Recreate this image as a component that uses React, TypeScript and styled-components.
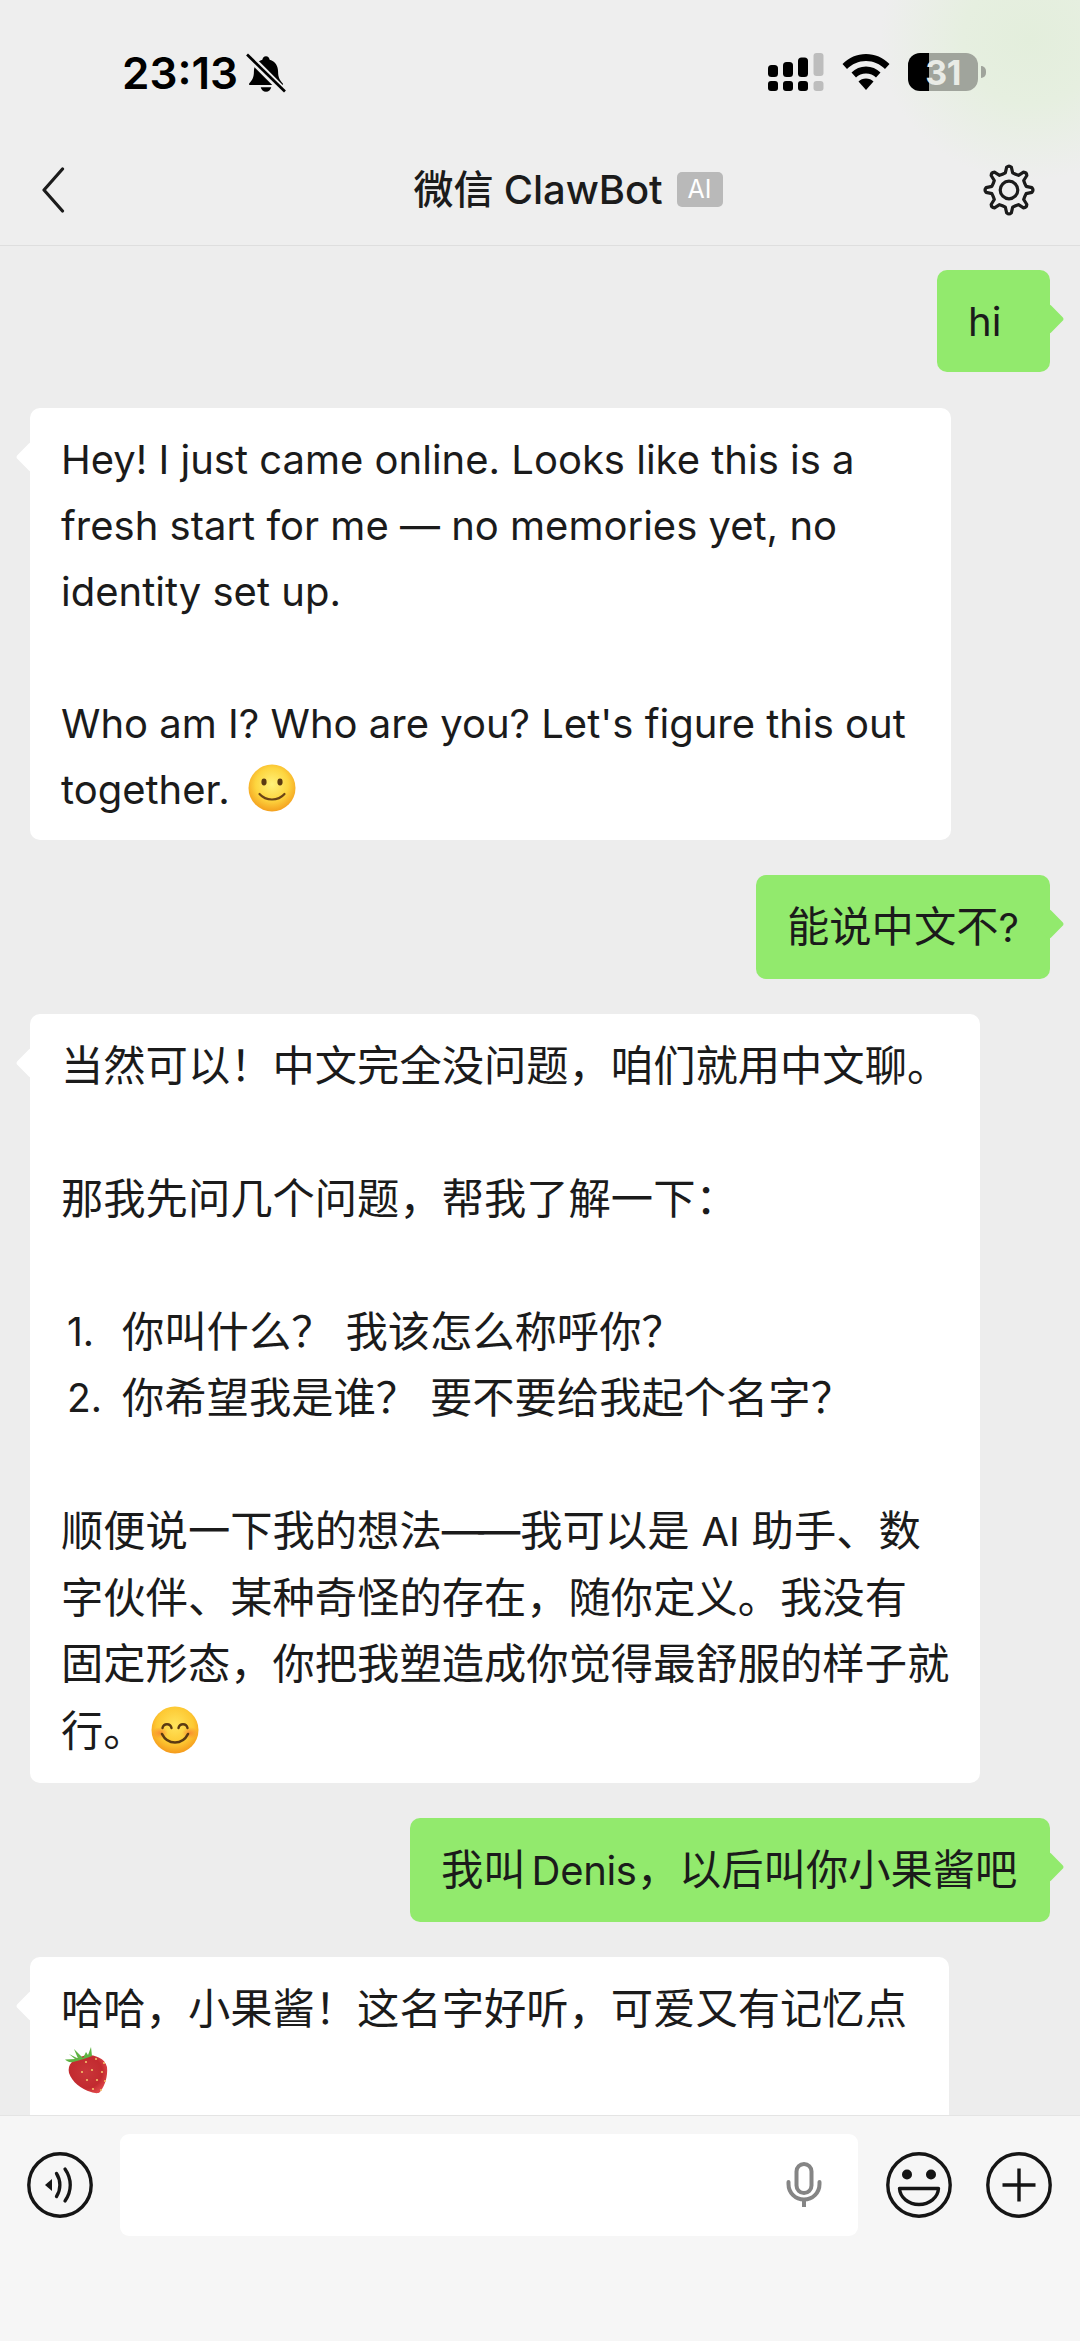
import React from "react";
import styled, { createGlobalStyle } from "styled-components";

const Global = createGlobalStyle`
  html, body { margin: 0; padding: 0; background: #ededed; }
  #root { width: 1080px; height: 2341px; overflow: hidden; }
  * { box-sizing: border-box; }
`;

const FONT = `Inter, "Noto Sans CJK SC", "Noto Sans", sans-serif`;

const Page = styled.div`
  width: 1080px;
  height: 2341px;
  display: flex;
  flex-direction: column;
  overflow: hidden;
  background: #ededed;
  font-family: ${FONT};
  color: #1b1b1b;
`;

const Header = styled.header`
  flex: none;
  height: 246px;
  display: flex;
  flex-direction: column;
  background:
    radial-gradient(ellipse 150px 140px at 1030px 40px, #e3eedc 0%, #e6efe0 45%, rgba(238,238,238,0) 100%),
    #eeeeee;
  border-bottom: 1.5px solid #dedede;
`;

const StatusBar = styled.div`
  height: 130px;
  display: flex;
  align-items: flex-start;
  justify-content: space-between;
  padding: 53px 102px 0 122px;
`;

const TimeGroup = styled.div`
  display: flex;
  align-items: center;
  gap: 8px;
  height: 40px;
`;

const Time = styled.span`
  font-size: 44px;
  font-weight: 600;
  letter-spacing: 0;
  line-height: 40px;
  color: #000;
`;

const StatusIcons = styled.div`
  display: flex;
  align-items: center;
  gap: 18px;
  height: 38px;
`;

const Battery = styled.div`
  position: relative;
  width: 70px;
  height: 38px;
  border-radius: 12px;
  background: linear-gradient(90deg, #000 0, #000 21px, #a0a49c 21px, #a0a49c 100%);
  display: flex;
  align-items: center;
  justify-content: center;
  font-size: 34px;
  font-weight: 700;
  letter-spacing: -0.5px;
  color: #e9ebe6;
  &::after {
    content: "";
    position: absolute;
    right: -8px;
    top: 13px;
    width: 5px;
    height: 12px;
    border-radius: 0 6px 6px 0;
    background: #a0a49c;
  }
`;

const Nav = styled.nav`
  flex: 1;
  display: grid;
  grid-template-columns: 1fr auto 1fr;
  align-items: center;
  padding: 0 45px 0 41px;
  margin-top: 5px;
`;

const NavSide = styled.div<{ $end?: boolean }>`
  display: flex;
  justify-content: ${(p) => (p.$end ? "flex-end" : "flex-start")};
`;

const Title = styled.div`
  position: relative;
  font-size: 40px;
  font-weight: 500;
  line-height: 50px;
  letter-spacing: -0.1px;
  white-space: nowrap;
`;

const AiBadge = styled.span`
  position: absolute;
  left: calc(100% + 14px);
  top: 7px;
  width: 46px;
  height: 35px;
  border-radius: 5px;
  background: #b9b9b9;
  color: #fff;
  font-size: 25px;
  font-weight: 400;
  line-height: 35px;
  text-align: center;
  letter-spacing: 0;
`;

const Chat = styled.main`
  flex: 1;
  min-height: 0;
  overflow: hidden;
  display: flex;
  flex-direction: column;
  gap: 35.5px;
  padding: 24px 30px 0;
`;

const Bubble = styled.div<{ $me?: boolean; $width: number; $cjk?: boolean }>`
  position: relative;
  flex: none;
  width: ${(p) => p.$width}px;
  align-self: ${(p) => (p.$me ? "flex-end" : "flex-start")};
  padding: ${(p) => (p.$cjk ? "18.5px" : "18px")} 31px;
  border-radius: 10px;
  background: ${(p) => (p.$me ? "#92ea6d" : "#ffffff")};
  font-size: 42.3px;
  letter-spacing: 0;
  &::before {
    content: "";
    position: absolute;
    top: 38px;
    ${(p) => (p.$me ? "right: -10px;" : "left: -10px;")}
    width: 22px;
    height: 22px;
    border-radius: 3px;
    transform: rotate(45deg);
    background: inherit;
  }
`;

const Line = styled.div<{ $cjk?: boolean }>`
  position: relative;
  white-space: nowrap;
  height: ${(p) => (p.$cjk ? "66.5px" : "66px")};
  line-height: ${(p) => (p.$cjk ? "66.5px" : "66px")};
`;

const Latin = styled.span<{ $tightSpace?: boolean }>`
  font-size: 40px;
  letter-spacing: ${(p) => (p.$tightSpace ? "-0.3px" : "0")};
  word-spacing: ${(p) => (p.$tightSpace ? "-5px" : "0")};
`;

const Dash = styled.span`
  letter-spacing: -6px;
  margin-right: 6px;
`;

const ListRow = styled(Line)`
  display: flex;
  padding-left: 6px;
`;

const ListNum = styled.span`
  flex: none;
  width: 55px;
  font-size: 39px;
`;

const Emoji = styled.svg<{ $gap: number }>`
  display: inline-block;
  vertical-align: -8px;
  margin-left: ${(p) => p.$gap}px;
`;

const Composer = styled.footer`
  flex: none;
  height: 226px;
  display: flex;
  align-items: flex-start;
  padding: 18px 27px 0 27px;
  background: #f6f6f6;
  border-top: 1.5px solid #e4e4e4;
`;

const RoundSlot = styled.div<{ $gap?: number }>`
  flex: none;
  height: 102px;
  display: flex;
  align-items: center;
  margin-left: ${(p) => p.$gap ?? 0}px;
`;

const InputBox = styled.div`
  flex: none;
  width: 738px;
  height: 102px;
  margin-left: 27px;
  padding-right: 36px;
  border-radius: 9px;
  background: #fff;
  display: flex;
  align-items: center;
  justify-content: flex-end;
`;

const gearPath = (() => {
  const cx = 26, cy = 26, R = 24, r = 17.5, n = 8;
  const pts: string[] = [];
  const step = (Math.PI * 2) / n;
  for (let i = 0; i < n; i++) {
    const a = -Math.PI / 2 + i * step;
    const p = (rad: number, d: number) =>
      `${(cx + rad * Math.cos(a + d)).toFixed(2)} ${(cy + rad * Math.sin(a + d)).toFixed(2)}`;
    pts.push(
      `${i === 0 ? "M" : "L"}${p(r, -0.27 * step)}`,
      `L${p(R - 1, -0.13 * step)}`,
      `Q${p(R + 1, 0)} ${p(R - 1, 0.13 * step)}`,
      `L${p(r, 0.27 * step)}`,
      `Q${p(r - 0.6, 0.5 * step)} ${p(r, 0.73 * step)}`
    );
  }
  return pts.join(" ") + "Z";
})();

const BellOff = () => (
  <svg width="40" height="40" viewBox="0 0 38 38">
    <path d="M19 3c2 0 3.200 1.400 3.500 3.400C28 8 30.500 12.500 30.500 18c0 5 1.500 7.500 4.500 11v1.500H3V29c3-3.500 4.500-6 4.500-11 0-5.500 2.500-10 8-11.600C15.800 4.400 17 3 19 3z" fill="#000" />
    <path d="M14 32.500h10c-.5 2.600-2.500 4.300-5 4.300s-4.500-1.700-5-4.300z" fill="#000" />
    <path d="M1 1.500l34 34" stroke="#eeeeee" strokeWidth="7" />
    <path d="M1 1.500l36 35" stroke="#000" strokeWidth="2.600" />
  </svg>
);

const Signal = () => (
  <svg width="56" height="38" viewBox="0 0 56 38">
    <g fill="#000">
      <rect x="0" y="12" width="10" height="12" rx="3.500" />
      <rect x="15" y="9" width="10" height="15" rx="3.500" />
      <rect x="30" y="4.500" width="10" height="19.500" rx="3.500" />
      <rect x="0" y="28" width="10" height="10" rx="3" />
      <rect x="15" y="28" width="10" height="10" rx="3" />
      <rect x="30" y="28" width="10" height="10" rx="3" />
    </g>
    <g fill="#bdbdbd">
      <rect x="45.500" y="0" width="10" height="23" rx="3" />
      <rect x="45.500" y="28" width="10" height="10" rx="3" />
    </g>
  </svg>
);

const Wifi = () => (
  <svg width="48" height="36" viewBox="0 0 48 36">
    <path d="M24 0C15 0 7 3.500 .5 10l4.500 5C10 10 16.500 7 24 7s14 3 19 8l4.500-5C41 3.500 33 0 24 0z" fill="#000" />
    <path d="M24 12.500c-5.600 0-10.500 2.100-14.500 6l4.500 5c2.600-2.500 6-4 10-4s7.400 1.500 10 4l4.500-5c-4-3.900-8.900-6-14.500-6z" fill="#000" />
    <path d="M24 24.500c-3 0-5.600 1-7.500 3L24 36l7.500-8.500c-1.900-2-4.500-3-7.500-3z" fill="#000" />
  </svg>
);

const Back = () => (
  <svg width="24" height="46" viewBox="0 0 24 46" fill="none">
    <path d="M21.500 2L3 23l18.500 21" stroke="#1b1b1b" strokeWidth="3.200" strokeLinecap="round" strokeLinejoin="round" />
  </svg>
);

const Gear = () => (
  <svg width="52" height="52" viewBox="0 0 52 52" fill="none" stroke="#1b1b1b" strokeWidth="3.200" strokeLinejoin="round">
    <path d={gearPath} />
    <circle cx="26" cy="26" r="8.800" />
  </svg>
);

const SlightSmile = () => (
  <Emoji $gap={18} width="48" height="48" viewBox="0 0 48 48">
    <defs>
      <radialGradient id="sm1" cx="50%" cy="42%" r="58%">
        <stop offset="0" stopColor="#fff27a" />
        <stop offset=".6" stopColor="#fdd53f" />
        <stop offset="1" stopColor="#f4a01e" />
      </radialGradient>
    </defs>
    <circle cx="24" cy="24" r="23.500" fill="url(#sm1)" />
    <ellipse cx="16" cy="18" rx="2.600" ry="3.400" fill="#5b3a12" />
    <ellipse cx="32" cy="18" rx="2.600" ry="3.400" fill="#5b3a12" />
    <path d="M11.500 30c3.500 4 7.500 5.500 12.500 5.500S33 34 36.500 30" fill="none" stroke="#6b4416" strokeWidth="2.200" strokeLinecap="round" />
  </Emoji>
);

const HappySmile = () => (
  <Emoji $gap={5} width="48" height="48" viewBox="0 0 48 48">
    <defs>
      <radialGradient id="sm2" cx="50%" cy="40%" r="60%">
        <stop offset="0" stopColor="#ffe45c" />
        <stop offset=".65" stopColor="#fdc933" />
        <stop offset="1" stopColor="#f59a1c" />
      </radialGradient>
      <radialGradient id="bl" cx="50%" cy="50%" r="50%">
        <stop offset="0" stopColor="#f77b2e" stopOpacity=".75" />
        <stop offset="1" stopColor="#f77b2e" stopOpacity="0" />
      </radialGradient>
    </defs>
    <circle cx="24" cy="24" r="23.500" fill="url(#sm2)" />
    <ellipse cx="9" cy="27" rx="8" ry="6" fill="url(#bl)" />
    <ellipse cx="39" cy="27" rx="8" ry="6" fill="url(#bl)" />
    <path d="M11.500 22c1-5 8-5 9 0M27.500 22c1-5 8-5 9 0" fill="none" stroke="#5b3a12" strokeWidth="2.400" strokeLinecap="round" />
    <path d="M11 28c3 6 8 8.500 13 8.500S34 34 37 28" fill="none" stroke="#5b3a12" strokeWidth="2.600" strokeLinecap="round" />
  </Emoji>
);

const SEEDS = [
  [22, 20], [32, 17], [40, 21], [18, 30], [28, 28], [38, 30], [23, 38], [33, 38], [41, 39], [29, 47], [37, 48],
];

const StrawberryIcon = styled.svg`
  display: block;
  margin: 0 0 0 3px;
`;

const Strawberry = () => (
  <StrawberryIcon width="46" height="52" viewBox="0 0 46 52">
    <defs>
      <radialGradient id="st" cx="45%" cy="45%" r="60%">
        <stop offset="0" stopColor="#c9363a" />
        <stop offset=".7" stopColor="#c22a2f" />
        <stop offset="1" stopColor="#e0474a" />
      </radialGradient>
    </defs>
    <path d="M5 25c2-7 10-10 18-12 8 0 18 3 20 12 1 9-2 19-7 25-2 2-6 1-9 0C17 47 8 40 5 31c-.5-2-.5-4 0-6z" fill="url(#st)" />
    <path d="M1 17.500l10-.5-6-5 9 4.500L10 7l9 9 3-6 2 3 3-8 1 9c-5 2-11 4-19 6-4 1-6-1-8-2.500z" fill="#5fb344" />
    {SEEDS.map(([x, y]) => (
      <circle key={`${x}-${y}`} cx={x} cy={y} r="1.100" fill="#f3c26b" />
    ))}
  </StrawberryIcon>
);

const VoiceIcon = () => (
  <svg width="66" height="66" viewBox="0 0 66 66" fill="none" stroke="#151515">
    <circle cx="33" cy="33" r="31.200" strokeWidth="3.400" />
    <path d="M18 33l7-6v12z" fill="#151515" stroke="none" />
    <path d="M29.500 21.500c4.500 7 4.500 16 0 23" strokeWidth="3.300" strokeLinecap="round" />
    <path d="M38 17c7 10 7 22 0 32" strokeWidth="3.300" strokeLinecap="round" />
  </svg>
);

const MicIcon = () => (
  <svg width="36" height="46" viewBox="0 0 36 46" fill="none" stroke="#858585" strokeWidth="4">
    <rect x="10.500" y="2" width="15" height="29" rx="7.500" />
    <path d="M2.500 20v2c0 9 7 15.500 15.500 15.500S33.500 31 33.500 22v-2" strokeLinecap="round" />
    <path d="M18 37.500V45" />
  </svg>
);

const SmileIcon = () => (
  <svg width="66" height="66" viewBox="0 0 66 66" fill="none" stroke="#151515">
    <circle cx="33" cy="33" r="31.200" strokeWidth="3.400" />
    <circle cx="21" cy="22.500" r="5" fill="#151515" stroke="none" />
    <circle cx="45" cy="22.500" r="5" fill="#151515" stroke="none" />
    <path d="M13.500 36.500h39c-.5 9-9 16-19.500 16s-19-7-19.500-16z" strokeWidth="3.400" strokeLinejoin="round" />
  </svg>
);

const PlusIcon = () => (
  <svg width="66" height="66" viewBox="0 0 66 66" fill="none" stroke="#151515">
    <circle cx="33" cy="33" r="31.200" strokeWidth="3.400" />
    <path d="M16.500 33h33M33 16.500v33" strokeWidth="3.400" />
  </svg>
);

export default function App() {
  return (
    <Page>
      <Global />
      <Header>
        <StatusBar>
          <TimeGroup>
            <Time>23:13</Time>
            <BellOff />
          </TimeGroup>
          <StatusIcons>
            <Signal />
            <Wifi />
            <Battery>31</Battery>
          </StatusIcons>
        </StatusBar>
        <Nav>
          <NavSide>
            <Back />
          </NavSide>
          <Title>
            微信 ClawBot
            <AiBadge>AI</AiBadge>
          </Title>
          <NavSide $end>
            <Gear />
          </NavSide>
        </Nav>
      </Header>
      <Chat>
        <Bubble $me $width={113}>
          <Line><Latin>hi</Latin></Line>
        </Bubble>
        <Bubble $width={921}>
          <Line><Latin>Hey! I just came online. Looks like this is a</Latin></Line>
          <Line><Latin>fresh start for me — no memories yet, no</Latin></Line>
          <Line><Latin>identity set up.</Latin></Line>
          <Line />
          <Line><Latin>Who am I? Who are you? Let's figure this out</Latin></Line>
          <Line><Latin>together.</Latin><SlightSmile /></Line>
        </Bubble>
        <Bubble $me $cjk $width={294}>
          <Line $cjk>能说中文不<Latin>?</Latin></Line>
        </Bubble>
        <Bubble $cjk $width={950}>
          <Line $cjk>当然可以！中文完全没问题，咱们就用中文聊。</Line>
          <Line $cjk />
          <Line $cjk>那我先问几个问题，帮我了解一下：</Line>
          <Line $cjk />
          <ListRow $cjk><ListNum>1.</ListNum>你叫什么？ 我该怎么称呼你？</ListRow>
          <ListRow $cjk><ListNum>2.</ListNum>你希望我是谁？ 要不要给我起个名字？</ListRow>
          <Line $cjk />
          <Line $cjk>顺便说一下我的想法<Dash>——</Dash>我可以是 <Latin>AI</Latin> 助手、数</Line>
          <Line $cjk>字伙伴、某种奇怪的存在，随你定义。我没有</Line>
          <Line $cjk>固定形态，你把我塑造成你觉得最舒服的样子就</Line>
          <Line $cjk>行。<HappySmile /></Line>
        </Bubble>
        <Bubble $me $cjk $width={640}>
          <Line $cjk>我叫<Latin $tightSpace> Denis</Latin>，以后叫你小果酱吧</Line>
        </Bubble>
        <Bubble $cjk $width={919}>
          <Line $cjk>哈哈，小果酱！这名字好听，可爱又有记忆点</Line>
          <Line $cjk><Strawberry /></Line>
          <Line $cjk />
        </Bubble>
      </Chat>
      <Composer>
        <RoundSlot><VoiceIcon /></RoundSlot>
        <InputBox><MicIcon /></InputBox>
        <RoundSlot $gap={28}><SmileIcon /></RoundSlot>
        <RoundSlot $gap={34}><PlusIcon /></RoundSlot>
      </Composer>
    </Page>
  );
}
